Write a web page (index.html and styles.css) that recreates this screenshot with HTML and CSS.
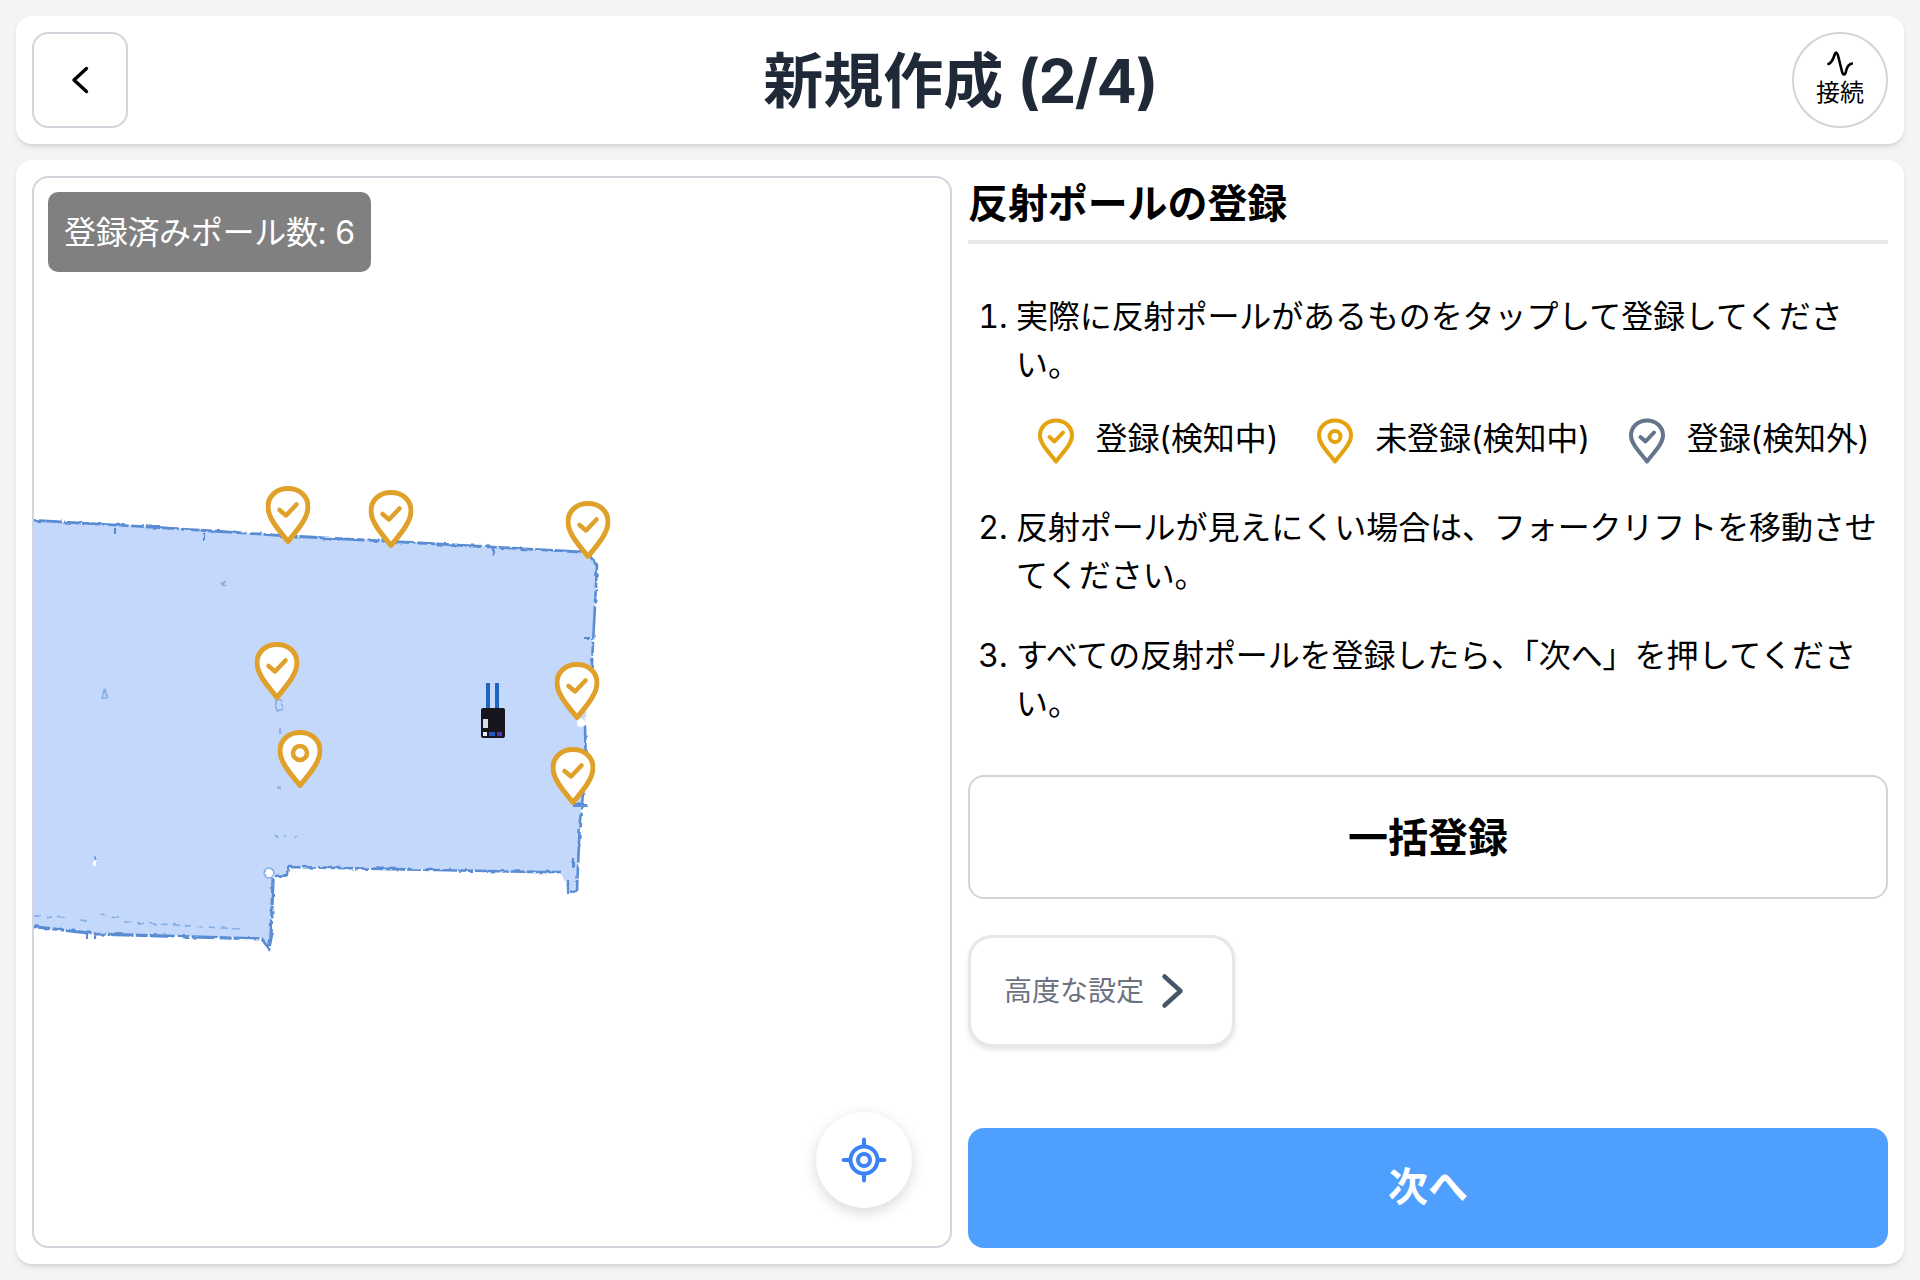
FILE: index.html
```html
<!DOCTYPE html>
<html lang="ja">
<head>
<meta charset="utf-8">
<title>新規作成 (2/4)</title>
<link rel="stylesheet" href="styles.css">
</head>
<body>
<div class="screen">
  <header class="topbar">
    <button class="back-btn" type="button" aria-label="戻る">
      <svg width="24" height="30" viewBox="0 0 24 30"><path d="M18.500 3.500L6 15l12.500 11.500" fill="none" stroke="#000" stroke-width="3.400" stroke-linecap="round" stroke-linejoin="round"/></svg>
    </button>
    <h1 class="page-title">新規作成 <span class="title-step">(2/4)</span></h1>
    <button class="connect-btn" type="button">
      <svg width="26" height="26" viewBox="0 0 26 26"><path d="M1.500 13C4 12 6 9 7.700 3.500 8.700.8 10 1 11 4.500L15 20.500C16 24.500 18 24.500 18.800 21 20 15 22 13 25 12.500" fill="none" stroke="#000" stroke-width="2.600" stroke-linecap="round" stroke-linejoin="round"/></svg>
      <span>接続</span>
    </button>
  </header>

  <main class="panel">
    <section class="map">
      <svg class="map-canvas" viewBox="34 178 916 1068" width="916" height="1068">
        <defs>
          <filter id="soft" x="-5%" y="-5%" width="110%" height="110%"><feGaussianBlur stdDeviation="0.7"/></filter>
          <filter id="ragged" x="-5%" y="-5%" width="110%" height="110%">
            <feTurbulence type="fractalNoise" baseFrequency="0.14" numOctaves="2" seed="4" result="noise"/>
            <feDisplacementMap in="SourceGraphic" in2="noise" scale="3.500" xChannelSelector="R" yChannelSelector="G"/>
            <feGaussianBlur stdDeviation="0.65"/>
          </filter>
          <filter id="soft-pin" x="-10%" y="-10%" width="120%" height="120%"><feGaussianBlur stdDeviation="0.4"/></filter>
          <symbol id="pin-check" viewBox="0 0 45 58">
            <path d="M22.500 55.500C15 46 2.500 33 2.500 21 2.500 10 11 2.500 22.500 2.500S42.500 10 42.500 21C42.500 33 30 46 22.500 55.500Z" fill="#fff" stroke="#e0a12a" stroke-width="5" stroke-linejoin="round"/>
            <path d="M14 24l6.500 5.500L31 18.500" fill="none" stroke="#e0a12a" stroke-width="4.500" stroke-linecap="round" stroke-linejoin="round"/>
          </symbol>
          <symbol id="pin-ring" viewBox="0 0 45 58">
            <path d="M22.500 55.500C15 46 2.500 33 2.500 21 2.500 10 11 2.500 22.500 2.500S42.500 10 42.500 21C42.500 33 30 46 22.500 55.500Z" fill="#fff" stroke="#e0a12a" stroke-width="5" stroke-linejoin="round"/>
            <circle cx="22.500" cy="23" r="7" fill="none" stroke="#e0a12a" stroke-width="4.500"/>
          </symbol>
        </defs>
        <g filter="url(#ragged)">
          <path d="M28 520L581 552 597 563 591 663 585 723 585 760 579 820 577 890 569 893 561 873 534 872 289 867 287 875 275 877 271 937 269 947 261 938 95 933 28 927Z" fill="#c3d8fa"/>
          <path d="M28 520L150 527 290 536 420 543 581 552" fill="none" stroke="#5a8cd4" stroke-width="2.800" stroke-dasharray="34 2 18 1 46 3 12 2"/>
          <path d="M590 556L597 566 592 663 590 682M585 725L586 770 580 820 577 890 570 892M561 872L534 872 289 867 288 875 276 876" fill="none" stroke="#5a8cd4" stroke-width="2.600" stroke-dasharray="34 2 14 2"/>
          <path d="M273 878L271 938 269 948 262 939 97 934 28 926" fill="none" stroke="#5a8cd4" stroke-width="3.200" stroke-dasharray="26 2 12 2"/>
          <path d="M34 916L68 918M80 920L88 921M100 915L118 917M125 922L240 929" fill="none" stroke="#86ace6" stroke-width="1.600" stroke-dasharray="7 5"/>
          <path d="M87 933v6M96 934v6M115 528v6M204 533v7M493 548v8M573 858v10M568 880v14M590 638h-6" fill="none" stroke="#5a8cd4" stroke-width="2.200"/>
          <circle cx="269" cy="873" r="5" fill="#fff" stroke="#86ace6" stroke-width="1.500"/>
          <circle cx="581" cy="723" r="4" fill="#fff"/>
          <path d="M226 581l-4 3 4 3M105 690l-3 8h6ZM276 700h6v10h-6ZM281 728v6M277 787h4M298 787h4M275 836h3M284 836h2M295 836h3" fill="none" stroke="#86ace6" stroke-width="1.600"/>
          <path d="M95 855l-2 6h4Z" fill="#5a8cd4"/>
          <rect x="93" y="860" width="4" height="6" fill="#fff"/>
          <path d="M573 803h15l1 4h-16Z" fill="#5a8ed8"/>
        </g>
        <g filter="url(#soft)">
          <rect x="486" y="683" width="4" height="26" fill="#1f66c0"/>
          <rect x="495" y="683" width="4" height="26" fill="#1f66c0"/>
          <rect x="481" y="708" width="24" height="30" rx="2" fill="#14171f"/>
          <rect x="483" y="719" width="5" height="9" fill="#d8dde6"/>
          <rect x="483" y="732" width="4" height="4" fill="#e6eaf2"/>
          <rect x="489" y="732" width="6" height="4" fill="#2458c8"/>
          <rect x="497" y="732" width="5" height="4" fill="#5a35b0"/>
        </g>
        <g filter="url(#soft-pin)">
          <use href="#pin-check" x="265.500" y="486" width="45" height="58"/>
          <use href="#pin-check" x="368.500" y="490" width="45" height="58"/>
          <use href="#pin-check" x="565.500" y="501" width="45" height="58"/>
          <use href="#pin-check" x="254.500" y="642" width="45" height="58"/>
          <use href="#pin-check" x="554.500" y="662" width="45" height="58"/>
          <use href="#pin-ring" x="277.500" y="730" width="45" height="58"/>
          <use href="#pin-check" x="550.500" y="747" width="45" height="58"/>
        </g>
      </svg>
      <div class="count-badge">登録済みポール数: 6</div>
      <button class="locate-btn" type="button" aria-label="現在地">
        <svg width="48" height="48" viewBox="0 0 48 48" fill="none" stroke="#3b82f6" stroke-width="4" stroke-linecap="round">
          <circle cx="24" cy="24" r="13.500"/>
          <circle cx="24" cy="24" r="6"/>
          <path d="M24 3.500v6.500M24 38v6.500M3.500 24h6.500M38 24h6.500"/>
        </svg>
      </button>
    </section>

    <section class="side">
      <h2 class="side-title">反射ポールの登録</h2>
      <ol class="steps">
        <li>
          <p>実際に反射ポールがあるものをタップして登録してください。</p>
          <div class="legend">
            <span class="legend-item">
              <svg width="38" height="46" viewBox="0 0 38 46" fill="none" stroke="#e5a20f" stroke-width="4" stroke-linecap="round" stroke-linejoin="round"><path d="M19 43.500C12 34 3 26 3 17.500 3 9 10 2.500 19 2.500S35 9 35 17.500C35 26 26 34 19 43.500Z"/><path d="M12.500 19l5 4.500 8.500-9"/></svg>
              登録(検知中)
            </span>
            <span class="legend-item">
              <svg width="38" height="46" viewBox="0 0 38 46" fill="none" stroke="#e5a20f" stroke-width="4" stroke-linecap="round" stroke-linejoin="round"><path d="M19 43.500C12 34 3 26 3 17.500 3 9 10 2.500 19 2.500S35 9 35 17.500C35 26 26 34 19 43.500Z"/><circle cx="19" cy="18.500" r="5.500"/></svg>
              未登録(検知中)
            </span>
            <span class="legend-item">
              <svg width="38" height="46" viewBox="0 0 38 46" fill="none" stroke="#64748b" stroke-width="4" stroke-linecap="round" stroke-linejoin="round"><path d="M19 43.500C12 34 3 26 3 17.500 3 9 10 2.500 19 2.500S35 9 35 17.500C35 26 26 34 19 43.500Z"/><path d="M12.500 19l5 4.500 8.500-9"/></svg>
              登録(検知外)
            </span>
          </div>
        </li>
        <li><p>反射ポールが見えにくい場合は、フォークリフトを移動させてください。</p></li>
        <li><p>すべての反射ポールを登録したら、「次へ」を押してください。</p></li>
      </ol>
      <button class="bulk-btn" type="button">一括登録</button>
      <button class="advanced-btn" type="button">
        <span>高度な設定</span>
        <svg width="48" height="48" viewBox="0 0 48 48"><path d="M12.500 9.500L28.500 24 12.500 38.500" fill="none" stroke="#475569" stroke-width="4.500" stroke-linecap="round" stroke-linejoin="round"/></svg>
      </button>
      <button class="next-btn" type="button">次へ</button>
    </section>
  </main>
</div>
</body>
</html>
```
FILE: styles.css
```css
* { box-sizing: border-box; }
html, body { margin: 0; height: 1280px; overflow: hidden; }
body {
  background: #f3f4f6;
  color: #000;
  font-family: Inter, "Noto Sans CJK JP", sans-serif;
  font-size: 32px;
}
button { font: inherit; color: inherit; cursor: pointer; }
p, h1, h2, ol { margin: 0; }

.screen {
  height: 1280px;
  padding: 16px;
  display: flex;
  flex-direction: column;
  gap: 16px;
}

.topbar {
  height: 128px;
  flex: none;
  padding: 16px;
  display: flex;
  align-items: center;
  justify-content: space-between;
  background: #fff;
  border-radius: 16px;
  box-shadow: 0 4px 6px -1px rgba(0,0,0,.1), 0 2px 4px -2px rgba(0,0,0,.1);
}
.back-btn {
  width: 96px;
  height: 96px;
  display: flex;
  align-items: center;
  justify-content: center;
  background: #fff;
  border: 2px solid #d1d5db;
  border-radius: 16px;
  padding: 0;
}
.page-title {
  font-size: 60px;
  line-height: 72px;
  font-weight: 700;
  color: #1f2937;
  padding-top: 2px;
}
.title-step { letter-spacing: -1.500px; }
.connect-btn {
  width: 96px;
  height: 96px;
  display: flex;
  flex-direction: column;
  align-items: center;
  justify-content: center;
  gap: 2px;
  background: #fff;
  border: 2px solid #d1d5db;
  border-radius: 50%;
  padding: 0;
  font-size: 24px;
  line-height: 28px;
}
.connect-btn svg { margin-top: -2px; }
.connect-btn span { display: block; }

.panel {
  flex: 1;
  min-height: 0;
  padding: 16px;
  display: grid;
  grid-template-columns: 1fr 1fr;
  gap: 16px;
  background: #fff;
  border-radius: 16px;
  box-shadow: 0 4px 6px -1px rgba(0,0,0,.1), 0 2px 4px -2px rgba(0,0,0,.1);
}

.map {
  position: relative;
  overflow: hidden;
  background: #fff;
  border: 2px solid #d1d5db;
  border-radius: 16px;
}
.map-canvas { display: block; }
.count-badge {
  position: absolute;
  left: 14px;
  top: 14px;
  height: 80px;
  padding: 0 16px 4px;
  display: flex;
  align-items: center;
  letter-spacing: -.3px;
  background: #808080;
  color: #fff;
  border-radius: 10px;
}
.locate-btn {
  position: absolute;
  right: 38px;
  bottom: 38px;
  width: 96px;
  height: 96px;
  padding: 0;
  display: flex;
  align-items: center;
  justify-content: center;
  background: #fff;
  border: none;
  border-radius: 50%;
  box-shadow: 0 4px 14px rgba(0,0,0,.16);
}

.side {
  display: flex;
  flex-direction: column;
  align-items: stretch;
  min-width: 0;
}
.side-title {
  font-size: 40px;
  line-height: 56px;
  font-weight: 700;
  letter-spacing: -.1px;
  padding-bottom: 8px;
  border-bottom: 4px solid #e5e7eb;
}
.steps {
  margin-top: 49px;
  padding-left: 48px;
  line-height: 48px;
  letter-spacing: -.1px;
  display: flex;
  flex-direction: column;
  gap: 32px;
}
.legend {
  margin: 26px 0 9px 2px;
  height: 48px;
  display: flex;
  align-items: center;
  justify-content: center;
  gap: 38px;
  white-space: nowrap;
}
.legend-item {
  display: flex;
  align-items: center;
  gap: 21px;
}
.legend-item svg { margin-top: 3px; }
.bulk-btn {
  margin-top: 47px;
  height: 124px;
  flex: none;
  padding: 0 0 5px;
  font-size: 40px;
  font-weight: 700;
  background: #fff;
  border: 2px solid #d1d5db;
  border-radius: 16px;
}
.advanced-btn {
  margin-top: 36px;
  width: 267px;
  height: 112px;
  flex: none;
  padding: 0 0 0 33px;
  display: flex;
  align-items: center;
  gap: 8px;
  font-size: 28px;
  color: #6b7280;
  white-space: nowrap;
  background: #fff;
  border: 3.500px solid #e5e7eb;
  border-radius: 24px;
  box-shadow: 0 3px 5px rgba(0,0,0,.1);
}
.advanced-btn span { position: relative; bottom: 2px; }
.next-btn {
  margin-top: auto;
  height: 120px;
  flex: none;
  padding: 0 0 8px;
  font-size: 40px;
  font-weight: 700;
  color: #fff;
  background: #4f9fff;
  border: none;
  border-radius: 16px;
}
```
